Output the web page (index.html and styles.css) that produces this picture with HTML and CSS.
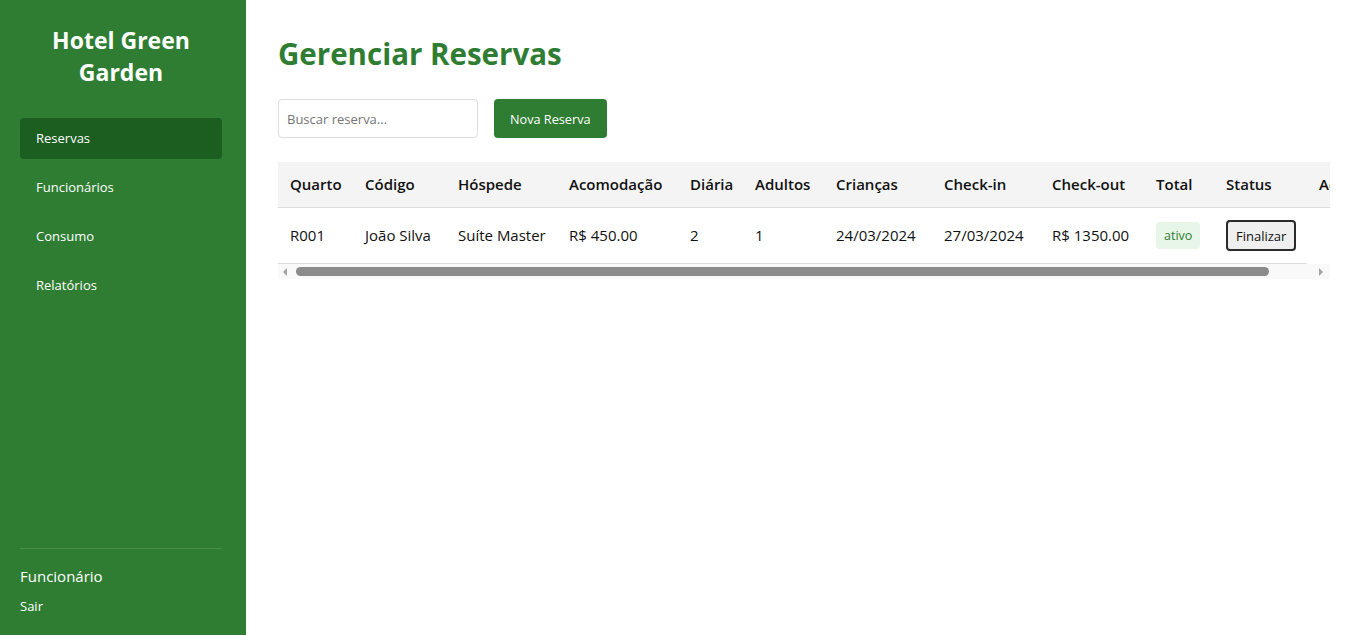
FILE: index.html
```html
<!DOCTYPE html>
<html lang="pt-BR">
<head>
<meta charset="utf-8">
<title>Hotel Green Garden - Reservas</title>
<link rel="stylesheet" href="styles.css">
</head>
<body>
<div class="app">
  <aside class="sidebar">
    <h2 class="brand">Hotel Green Garden</h2>
    <nav class="nav">
      <a class="nav-item active" href="#">Reservas</a>
      <a class="nav-item" href="#">Funcionários</a>
      <a class="nav-item" href="#">Consumo</a>
      <a class="nav-item" href="#">Relatórios</a>
    </nav>
    <div class="side-footer">
      <div class="user">Funcionário</div>
      <a class="logout" href="#">Sair</a>
    </div>
  </aside>
  <main class="main">
    <h1 class="title">Gerenciar Reservas</h1>
    <div class="toolbar">
      <input class="search" type="text" placeholder="Buscar reserva...">
      <button class="btn-primary">Nova Reserva</button>
    </div>
    <div class="table-box">
      <div class="table-wrap">
        <table class="table">
          <colgroup>
            <col class="c1"><col class="c2"><col class="c3"><col class="c4"><col class="c5"><col class="c6">
            <col class="c7"><col class="c8"><col class="c9"><col class="c10"><col class="c11"><col class="c12">
          </colgroup>
          <thead>
            <tr>
              <th>Quarto</th><th>Código</th><th>Hóspede</th><th>Acomodação</th><th>Diária</th><th>Adultos</th>
              <th>Crianças</th><th>Check-in</th><th>Check-out</th><th>Total</th><th>Status</th><th>Ações</th>
            </tr>
          </thead>
          <tbody>
            <tr>
              <td>R001</td><td>João Silva</td><td>Suíte Master</td><td>R$ 450.00</td><td>2</td><td>1</td>
              <td>24/03/2024</td><td>27/03/2024</td><td>R$ 1350.00</td>
              <td><span class="badge">ativo</span></td>
              <td><button class="btn-small">Finalizar</button></td>
            </tr>
          </tbody>
        </table>
      </div>
      <div class="hscroll" aria-hidden="true">
        <span class="hs-btn hs-left"><span class="arrow-left"></span></span>
        <span class="hs-track"><span class="hs-thumb"></span></span>
        <span class="hs-btn hs-right"><span class="arrow-right"></span></span>
      </div>
    </div>
  </main>
</div>
</body>
</html>
```

FILE: styles.css
```css
* { box-sizing: border-box; }
html, body { margin: 0; padding: 0; }
body {
  font-family: "Open Sans", "Noto Sans", sans-serif;
  color: #222;
  background: #fff;
}
.app {
  display: flex;
  min-height: 100vh;
}
.sidebar {
  width: 246px;
  flex-shrink: 0;
  background: #2e7d32;
  color: #fff;
  display: flex;
  flex-direction: column;
  padding: 24px 24px 19px 20px;
}
.brand {
  margin: 0 0 30px;
  font-size: 23px;
  line-height: 32px;
  font-weight: 700;
  text-align: center;
  padding: 0 8px;
}
.nav {
  display: flex;
  flex-direction: column;
  gap: 8px;
}
.nav-item {
  display: block;
  color: #fff;
  text-decoration: none;
  font-size: 13px;
  line-height: 17px;
  padding: 12px 16px;
  border-radius: 4px;
}
.nav-item.active { background: #1b5e20; }
.side-footer {
  margin-top: auto;
  border-top: 1px solid rgba(255,255,255,0.12);
  padding-top: 17px;
}
.user {
  font-size: 15px;
  line-height: 21px;
  margin-bottom: 10px;
}
.logout {
  display: block;
  color: #fff;
  text-decoration: none;
  font-size: 13px;
  line-height: 19px;
}
.main {
  flex: 1;
  min-width: 0;
  padding: 32px 30px 32px 32px;
}
.title {
  margin: 0 0 23px;
  font-size: 29.5px;
  line-height: 44px;
  font-weight: 700;
  color: #2e7d32;
}
.toolbar {
  display: flex;
  gap: 16px;
  margin-bottom: 24px;
}
.search {
  width: 200px;
  height: 39px;
  padding: 0 8px;
  border: 1px solid #ddd;
  border-radius: 4px;
  font-family: inherit;
  font-size: 13px;
  color: #222;
}
.search::placeholder { color: #757575; }
.btn-primary {
  height: 39px;
  padding: 0 16px;
  background: #2e7d32;
  color: #fff;
  border: none;
  border-radius: 4px;
  font-family: inherit;
  font-size: 12.7px;
}
.table-box {
  display: flex;
  flex-direction: column;
}
.table-wrap {
  overflow: hidden;
}
.hscroll {
  display: flex;
  align-items: center;
  height: 15px;
  background: #f9f9f9;
}
.hs-btn {
  display: flex;
  align-items: center;
  height: 100%;
}
.hs-left { width: 18px; padding-left: 5px; }
.hs-right { width: 15px; padding-left: 4px; }
.arrow-left {
  width: 0;
  height: 0;
  border-top: 4px solid transparent;
  border-bottom: 4px solid transparent;
  border-right: 4px solid #a3a3a3;
}
.arrow-right {
  width: 0;
  height: 0;
  border-top: 4px solid transparent;
  border-bottom: 4px solid transparent;
  border-left: 4px solid #a3a3a3;
}
.hs-track {
  flex: 1;
  display: flex;
  align-items: center;
  height: 100%;
}
.hs-thumb {
  width: 95.5%;
  height: 9px;
  border-radius: 5px;
  background: #8b8b8b;
}
.table {
  border-collapse: collapse;
  table-layout: fixed;
  width: 1098px;
  font-size: 15px;
}
.c1 { width: 75px; }
.c2 { width: 93px; }
.c3 { width: 111px; }
.c4 { width: 121px; }
.c5 { width: 65px; }
.c6 { width: 81px; }
.c7 { width: 108px; }
.c8 { width: 108px; }
.c9 { width: 104px; }
.c10 { width: 70px; }
.c11 { width: 93px; }
.c12 { width: 69px; }
.table th, .table td {
  padding: 12px;
  text-align: left;
  white-space: nowrap;
  border-bottom: 1px solid #ddd;
  line-height: 21px;
  overflow: hidden;
}
.table th {
  background: #f4f4f4;
  font-weight: 600;
  color: #111;
}
.table td { color: #111; }
.badge {
  display: inline-block;
  padding: 5px 8px;
  background: #e8f5e9;
  color: #2e7d32;
  border-radius: 4px;
  font-size: 12.5px;
  line-height: 17px;
  vertical-align: middle;
}
.btn-small {
  height: 31px;
  padding: 0 8px;
  background: #efefef;
  border: 2px solid #2a2a2a;
  border-radius: 4px;
  font-family: inherit;
  font-size: 13px;
  color: #111;
  vertical-align: middle;
}
```
